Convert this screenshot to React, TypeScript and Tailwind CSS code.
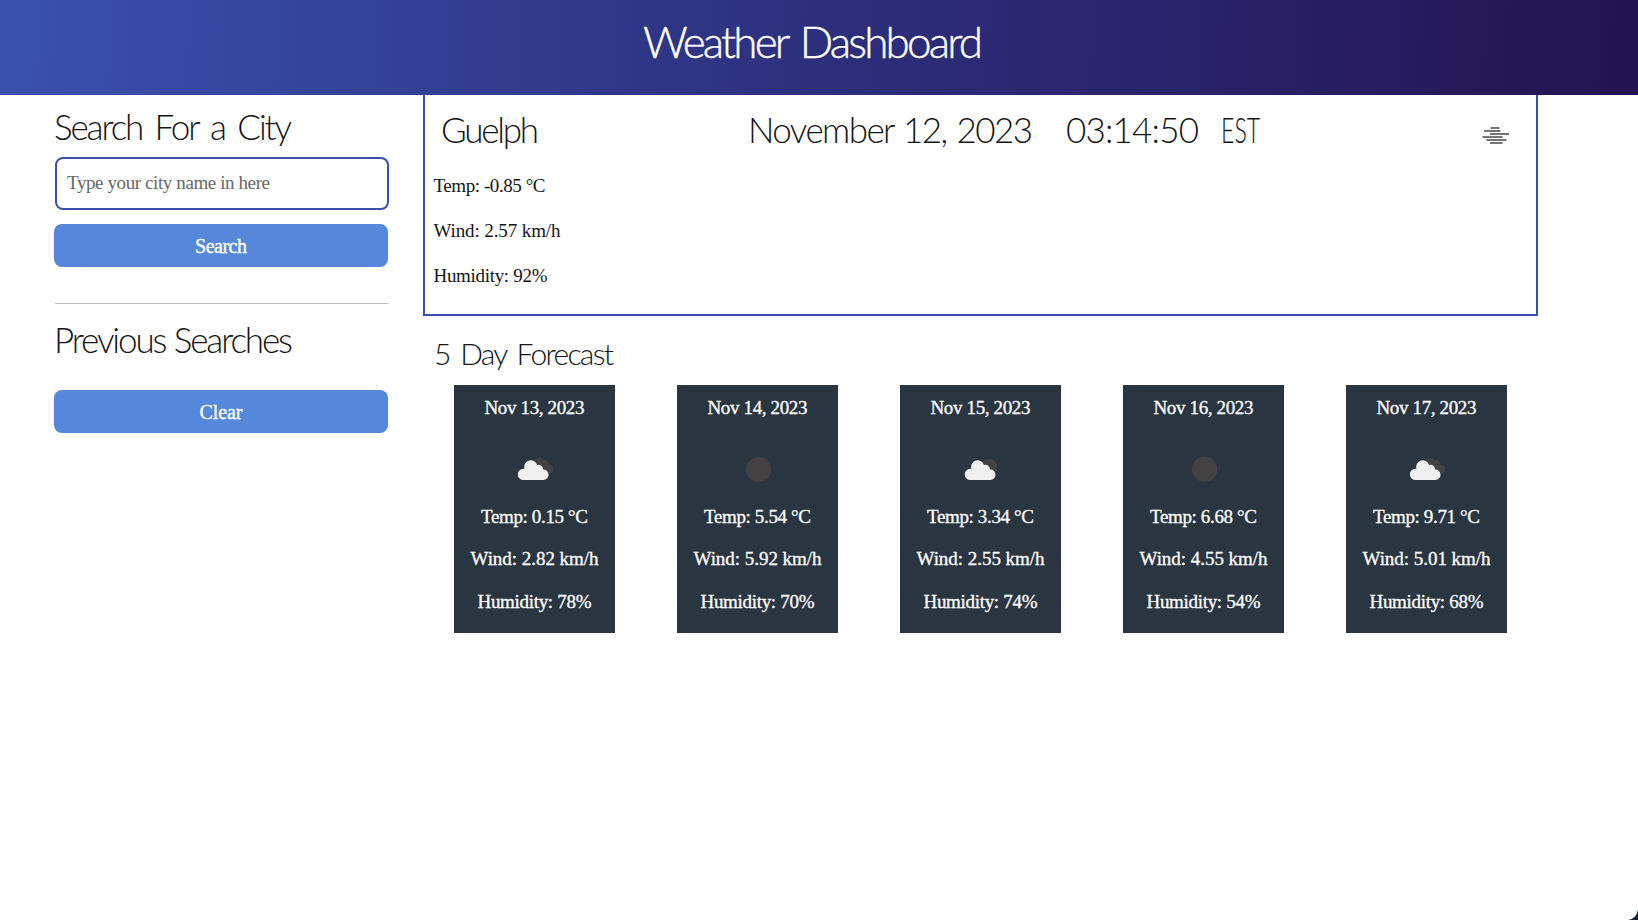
import { useLayoutEffect, useRef, useState } from "react";

type FitProps = { text: string; width: number; className?: string };

/** Single line of text whose tracking is adjusted so that it fills a given width. */
function Fit({ text, width, className = "" }: FitProps) {
  const ref = useRef<HTMLSpanElement>(null);
  const [spacing, setSpacing] = useState(0);
  useLayoutEffect(() => {
    const el = ref.current;
    if (!el) return;
    el.style.letterSpacing = "0px";
    const natural = el.getBoundingClientRect().width;
    const next = (width - natural) / (text.length - 1);
    el.style.letterSpacing = `${next}px`;
    setSpacing(next);
  }, [text, width]);
  return (
    <span
      ref={ref}
      className={`inline-block whitespace-pre ${className}`}
      style={{ letterSpacing: spacing, marginRight: -spacing }}
    >
      {text}
    </span>
  );
}

const display = "font-['Lato',sans-serif] font-light";

function Cloud({ children }: { children: React.ReactNode }) {
  return (
    <>
      {children}
      <path
        d="M13.500 49a5.600 5.600 0 0 1-.2-11.200h1.100a6.600 6.600 0 0 1 12.700-3.800 4.600 4.600 0 0 1 6.100 4.600 5.200 5.200 0 0 1 .3 10.400z"
        fill="#f0f0f0"
      />
    </>
  );
}

function WeatherIcon({ kind }: { kind: string }) {
  return (
    <svg className="block h-[65px] w-[50px]" viewBox="0 0 50 65">
      {kind === "clear" && <circle cx="25.6" cy="38.4" r="12.6" fill="#444142" />}
      {kind === "broken" && (
        <Cloud>
          <path
            d="M23.500 30a5.400 5.400 0 0 1 9.200-1 4 4 0 0 1 5.300 4.800 4.300 4.300 0 0 1 1.400 8.800l-4.400 1.200z"
            fill="#444142"
          />
        </Cloud>
      )}
      {kind === "few" && (
        <g transform="translate(.9 0)">
          <Cloud>
            <circle cx="31.800" cy="36.800" r="8.800" fill="#444142" />
          </Cloud>
        </g>
      )}
    </svg>
  );
}

const days = [
  { date: "Nov 13, 2023", icon: "broken", temp: "0.15", wind: "2.82", humidity: 78 },
  { date: "Nov 14, 2023", icon: "clear", temp: "5.54", wind: "5.92", humidity: 70 },
  { date: "Nov 15, 2023", icon: "few", temp: "3.34", wind: "2.55", humidity: 74 },
  { date: "Nov 16, 2023", icon: "clear", temp: "6.68", wind: "4.55", humidity: 54 },
  { date: "Nov 17, 2023", icon: "broken", temp: "9.71", wind: "5.01", humidity: 68 },
];

export default function App() {
  return (
    <div className="relative min-h-[920px] w-full overflow-hidden bg-white font-['Liberation_Serif',serif] text-[19px] text-[#151515]">
      <header className="flex h-[95px] justify-center bg-[linear-gradient(93deg,#3951ae_0%,#2d2f7c_50%,#29236a_72%,#231350_100%)] pr-[12px]">
        <h1 className={`${display} text-[44px] leading-[82px] text-white [-webkit-text-stroke:.4px_white]`}>
          <Fit text="Weather Dashboard" width={340} className="[word-spacing:4px]" />
        </h1>
      </header>

      <div className="flex">
        <aside className="ml-[54px] w-[335px]">
          <h2 className={`${display} h-[62px] text-[35px] leading-[63px]`}>
            <Fit text="Search For a City" width={238} className="[word-spacing:5px]" />
          </h2>
          <div className="ml-px flex h-[53px] items-center rounded-lg border-2 border-[#3a50aa] pl-2.5 text-[#686868]">
            <Fit text="Type your city name in here" width={203} />
          </div>
          <button className="mt-3.5 block h-[43px] w-[334px] rounded-lg bg-[#5587da] text-center text-[20px] font-normal text-white [-webkit-text-stroke:.35px_white]">
            <Fit text="Search" width={52} />
          </button>
          <hr className="mt-9 ml-px border-t border-[#bfbfbf]" />
          <h2 className={`${display} h-[71px] text-[35px] leading-[71px]`}>
            <Fit text="Previous Searches" width={239} className="[word-spacing:1px]" />
          </h2>
          <button className="mt-[15px] block h-[43px] w-[334px] rounded-lg bg-[#5587da] text-center text-[20px] font-normal text-white [-webkit-text-stroke:.35px_white]">
            <Fit text="Clear" width={43} />
          </button>
        </aside>

        <main className="ml-[34px] w-[1115px]">
          <section className="h-[221px] border-2 border-t-0 border-[#3a50aa]">
            <div className={`${display} flex h-[69px] items-center text-[35px] leading-[69px]`}>
              <h2 className="ml-4 w-[307px]">
                <Fit text="Guelph" width={98} />
              </h2>
              <h2 className="flex w-[731px]">
                <span className="w-[318px]">
                  <Fit text="November 12, 2023" width={285} className="[word-spacing:2px]" />
                </span>
                <span className="w-[155px]">
                  <Fit text="03:14:50" width={133} />
                </span>
                <span className="origin-left scale-x-[.66]">EST</span>
              </h2>
              <svg className="h-[30px] w-[30px]" viewBox="0 0 30 30" stroke="#484849" strokeWidth="1.7">
                <path d="M11.500 13h9M5 16h16.500M11 19h19M3.500 22h20M7.500 25h20M11 28h12.500" />
              </svg>
            </div>
            <div className="-mt-px ml-[8.5px] leading-[45px]">
              <p><Fit text="Temp: -0.85 °C" width={112} /></p>
              <p><Fit text="Wind: 2.57 km/h" width={127} /></p>
              <p><Fit text="Humidity: 92%" width={114} /></p>
            </div>
          </section>

          <h3 className={`${display} h-[69px] pt-[3px] pl-[11px] text-[30px] leading-[69px]`}>
            <Fit text="5 Day Forecast" width={180} className="[word-spacing:4px]" />
          </h3>
          <div className="ml-[31px] flex gap-[62px]">
            {days.map((day) => (
              <article
                key={day.date}
                className="flex h-[248px] w-[161px] shrink-0 flex-col items-center bg-[#2a3542] leading-[42.4px] text-white [-webkit-text-stroke:.3px_white]"
              >
                <h4 className="h-[46px] leading-[46px]"><Fit text={day.date} width={100} /></h4>
                <WeatherIcon kind={day.icon} />
                <p><Fit text={`Temp: ${day.temp} °C`} width={107} /></p>
                <p><Fit text={`Wind: ${day.wind} km/h`} width={128} /></p>
                <p><Fit text={`Humidity: ${day.humidity}%`} width={114} /></p>
              </article>
            ))}
          </div>
        </main>
      </div>

      <svg className="absolute right-0 bottom-0 h-2.5 w-2.5" viewBox="0 0 10 10">
        <path d="M0 10Q8 9 10 0V10z" fill="#0c2a33" />
      </svg>
    </div>
  );
}
